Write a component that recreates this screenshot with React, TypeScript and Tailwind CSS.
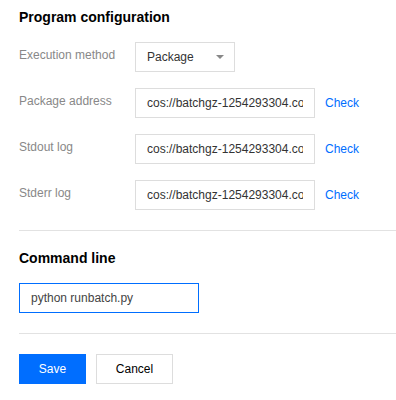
const font = { fontFamily: '"Liberation Sans", Arial, sans-serif' };

const cosPath = "cos://batchgz-1254293304.cos.ap-guangzhou.myqcloud.com/";

function Row({ label, children, check }: { label: string; children: React.ReactNode; check?: boolean }) {
  return (
    <div className="flex items-start">
      <div className="w-[116px] shrink-0 pt-[4px] text-[12px] leading-[18px] text-[#888]">{label}</div>
      {children}
      {check && (
        <a href="#" className="ml-[10px] self-center text-[12px] leading-[18px] text-[#006eff]">
          Check
        </a>
      )}
    </div>
  );
}

function PathInput({ value }: { value: string }) {
  return (
    <input
      readOnly
      value={value}
      style={font}
      className="h-[30px] w-[180px] border border-[#ddd] bg-white px-[11px] text-[12px] text-[#333] outline-none"
    />
  );
}

export default function App() {
  return (
    <div style={font} className="min-h-[400px] w-[396px] bg-white pl-[19px] pt-[7px]">
      <h2 className="text-[14px] font-bold leading-5 text-black">Program configuration</h2>

      <div className="mt-[15px] flex flex-col gap-4">
        <Row label="Execution method">
          <div className="flex h-[30px] w-[100px] items-center justify-between border border-[#ddd] bg-white pl-[11px] pr-[10px] text-[12px] text-[#333]">
            <span>Package</span>
            <svg width="8" height="4" viewBox="0 0 8 4">
              <path d="M0 0h8L4 4z" fill="#888" />
            </svg>
          </div>
        </Row>
        <Row label="Package address" check>
          <PathInput value={cosPath} />
        </Row>
        <Row label="Stdout log" check>
          <PathInput value={cosPath} />
        </Row>
        <Row label="Stderr log" check>
          <PathInput value={cosPath} />
        </Row>
      </div>

      <div className="mt-5 border-t border-[#e2e2e2]" />

      <h2 className="mt-[17px] text-[14px] font-bold leading-5 text-black">Command line</h2>
      <input
        readOnly
        value="python runbatch.py"
        style={font}
        className="mt-[15px] block h-[30px] w-[180px] border border-[#006eff] bg-white px-[11px] text-[12px] text-[#444] outline-none"
      />

      <div className="mt-5 border-t border-[#e2e2e2]" />

      <div className="mt-5 flex gap-[10px]">
        <button className="h-[30px] w-[67px] bg-[#006eff] text-[12px] text-white">Save</button>
        <button className="h-[30px] w-[77px] border border-[#ddd] bg-white text-[12px] text-black">Cancel</button>
      </div>
    </div>
  );
}
